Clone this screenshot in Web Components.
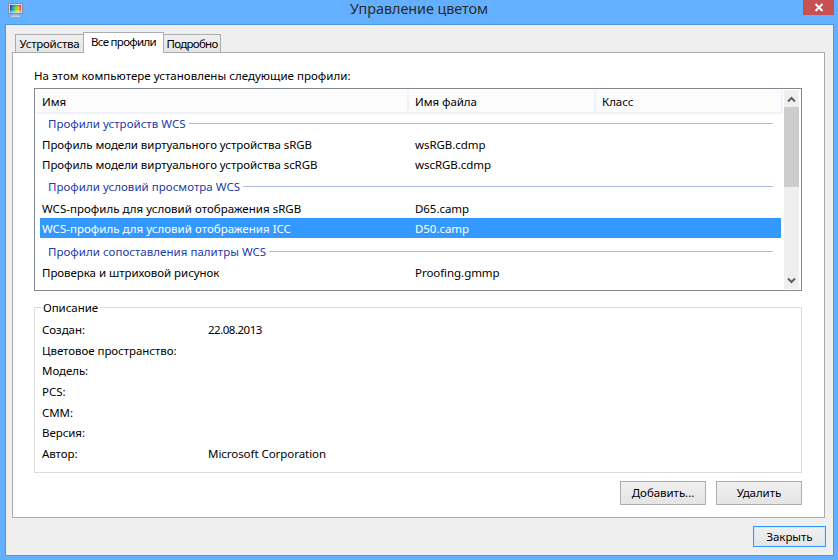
<!DOCTYPE html>
<html lang="ru">
<head>
<meta charset="utf-8">
<title>Управление цветом</title>
<style>
  html, body { margin: 0; height: 100%; background: #62b0ff; overflow: hidden; }
  body { font: 11.5px "Noto Sans", "Open Sans", sans-serif; letter-spacing: -0.05px; color: #000; }
</style>
</head>
<body>
<color-dialog heading="Управление цветом">
  <tab-strip></tab-strip>
  <tab-page>
    <profile-list></profile-list>
    <profile-info></profile-info>
    <div slot="actions">
      <win-button>Добавить...</win-button>
      <win-button>Удалить</win-button>
    </div>
  </tab-page>
  <win-button slot="footer" default>Закрыть</win-button>
</color-dialog>

<script>
// Окно
class ColorDialog extends HTMLElement {
  constructor() {
    super();
    const title = this.getAttribute('heading');
    this.attachShadow({ mode: 'open' }).innerHTML = `
      <style>
        :host { display: flex; flex-direction: column; width: 838px; height: 560px; box-sizing: border-box; }
        .bar { height: 24px; flex: none; display: grid; grid-template-columns: 1fr auto 1fr; }
        .icon { margin: 3px 0 0 8px; display: block; }
        .title { font-size: 14.4px; line-height: 17px; color: #2b2b2b; }
        .close { justify-self: end; width: 31px; height: 15px; margin-right: 4px; background: #c75050; display: flex; align-items: center; justify-content: center; }
        .client { flex: none; height: 532px; margin: 0 4px 0 5px; box-sizing: border-box; border: 1px solid #4c98dc; background: #efefef; padding: 8px 7px 0 6px; display: flex; flex-direction: column; }
        .foot { display: flex; justify-content: flex-end; margin-top: 8px; }
      </style>
      <div class="bar">
        <svg class="icon" width="15" height="14" viewBox="0 0 15 14">
          <defs>
            <linearGradient id="spec" x1="0" x2="1" y1="0" y2="0">
              <stop offset="0" stop-color="#1f2fc0"/><stop offset=".3" stop-color="#18b8c0"/>
              <stop offset=".55" stop-color="#7ce030"/><stop offset=".8" stop-color="#f0c020"/><stop offset="1" stop-color="#e03080"/>
            </linearGradient>
            <linearGradient id="fade" x1="0" x2="0" y1="0" y2="1">
              <stop offset="0" stop-color="#000" stop-opacity=".25"/><stop offset=".6" stop-color="#fff" stop-opacity="0"/><stop offset="1" stop-color="#fff" stop-opacity=".6"/>
            </linearGradient>
          </defs>
          <rect x=".5" y=".5" width="14" height="10" fill="#d9d9d9" stroke="#8e8e8e"/>
          <rect x="2" y="2" width="11" height="7.5" fill="url(#spec)"/>
          <rect x="2" y="2" width="11" height="7.5" fill="url(#fade)"/>
          <path d="M5 11h5v1.5H5z" fill="#b5b5b5"/>
          <path d="M3 12.5h9V14H3z" fill="#cfcfcf"/>
        </svg>
        <div class="title">${title}</div>
        <div class="close">
          <svg width="10" height="9" viewBox="0 0 10 9"><path d="M1.5 1l7 7M8.5 1l-7 7" stroke="#fff" stroke-width="2" fill="none"/></svg>
        </div>
      </div>
      <div class="client">
        <slot></slot>
        <div class="foot"><slot name="footer"></slot></div>
      </div>`;
  }
}

// Вкладки
class TabStrip extends HTMLElement {
  constructor() {
    super();
    this.attachShadow({ mode: 'open' }).innerHTML = `
      <style>
        :host { display: flex; height: 20px; flex: none; align-items: flex-end; padding-left: 4px; margin-bottom: -1px; position: relative; z-index: 1; }
        div { box-sizing: border-box; height: 18px; border: 1px solid #acacac; border-bottom: 0; margin: 0 0 1px -1px; background: linear-gradient(#f0f0f0, #e5e5e5); text-align: center; line-height: 18px; }
        .on { height: 21px; background: #fff; margin-bottom: 0; position: relative; line-height: 17px; }
      </style>
      <div style="width:69px;letter-spacing:-.25px">Устройства</div>
      <div class="on" style="width:81px;letter-spacing:-.7px">Все профили</div>
      <div style="width:58px;letter-spacing:-.7px">Подробно</div>`;
  }
}

class TabPage extends HTMLElement {
  constructor() {
    super();
    this.attachShadow({ mode: 'open' }).innerHTML = `
      <style>
        :host { display: flex; flex-direction: column; flex: none; height: 466px; box-sizing: border-box; border: 1px solid #acacac; background: #fff; padding: 14px 22px 0 21px; margin-right: 1px; }
        .lead { height: 21px; line-height: 17px; letter-spacing: .03px; }
        .actions { margin-top: 8px; }
        ::slotted([slot=actions]) { display: flex; justify-content: flex-end; gap: 10px; }
      </style>
      <div class="lead">На этом компьютере установлены следующие профили:</div>
      <slot></slot>
      <div class="actions"><slot name="actions"></slot></div>`;
  }
}

// Список профилей
const rows = [
  ['g', 'Профили устройств WCS'],
  ['r', 'Профиль модели виртуального устройства sRGB', 'wsRGB.cdmp'],
  ['r', 'Профиль модели виртуального устройства scRGB', 'wscRGB.cdmp'],
  ['g', 'Профили условий просмотра WCS'],
  ['r', 'WCS-профиль для условий отображения sRGB', 'D65.camp'],
  ['s', 'WCS-профиль для условий отображения ICC', 'D50.camp'],
  ['g', 'Профили сопоставления палитры WCS'],
  ['r', 'Проверка и штриховой рисунок', 'Proofing.gmmp'],
  ['r', 'Фотография', 'Photo.gmmp']
];

class ProfileList extends HTMLElement {
  constructor() {
    super();
    const body = rows.map(([kind, a, b]) => kind === 'g'
      ? `<div class="group"><span>${a}</span><i></i></div>`
      : `<div class="row ${kind === 's' ? 'sel' : ''}"><span class="c1 ${a.startsWith('WCS') ? 'wcs' : ''}">${a}</span><span>${b}</span></div>`).join('');
    this.attachShadow({ mode: 'open' }).innerHTML = `
      <style>
        :host { display: flex; flex: none; height: 203px; box-sizing: border-box; border: 1px solid #828790; padding: 1px 2px 1px 1px; background: #fff; margin-bottom: 16px; }
        .main { flex: none; width: 747px; overflow: hidden; }
        .head { display: grid; grid-template-columns: 373px 187px 187px; height: 22px; background: #fcfcfc; border-bottom: 2px solid #eef2fb; }
        .head div { padding-left: 6px; line-height: 23px; border-right: 2px solid #eef2fb; }
        .group { height: 24px; display: flex; align-items: center; padding: 0 10px 0 12px; color: #1c3aa9; gap: 3px; box-sizing: border-box; letter-spacing: .03px; }
        .head + .group { height: 20px; padding-bottom: 2px; }
        .sel + .group { margin: 1px 0 -1px; }
        .group i { flex: 1; height: 1px; background: #aebbdc; margin-top: 1px; }
        .row { display: grid; grid-template-columns: 373px 1fr; height: 20px; line-height: 22px; margin: 0 2px 0 4px; padding-left: 2px; }
        .row .c1 { white-space: nowrap; }
        .row .wcs { letter-spacing: .02px; }
        .sel { background: #3399ff; color: #fff; }
        .sb { margin-left: 1px; flex: 1; background: #efefef; display: flex; flex-direction: column; }
        .sb svg { flex: none; display: block; margin: 0 auto; }
        .thumb { height: 80px; background: #cdcdcd; flex: none; }
        .gap { flex: 1; }
      </style>
      <div class="main">
        <div class="head"><div>Имя</div><div>Имя файла</div><div>Класс</div></div>
        ${body}
      </div>
      <div class="sb">
        <svg width="15" height="17" viewBox="0 0 15 17"><path d="M4 11.5l3.5-3.5L11 11.5" fill="none" stroke="#606060" stroke-width="2"/></svg>
        <div class="thumb"></div>
        <div class="gap"></div>
        <svg width="15" height="17" viewBox="0 0 15 17"><path d="M4 6.5L7.5 10 11 6.5" fill="none" stroke="#606060" stroke-width="2"/></svg>
      </div>`;
  }
}

// Описание
const details = [
  ['Создан:', '<span style="letter-spacing:-.5px">22.08.2013</span>'],
  ['Цветовое пространство:', ''],
  ['Модель:', ''],
  ['PCS:', ''],
  ['CMM:', ''],
  ['Версия:', ''],
  ['Автор:', 'Microsoft Corporation']
];

class ProfileInfo extends HTMLElement {
  constructor() {
    super();
    this.attachShadow({ mode: 'open' }).innerHTML = `
      <style>
        :host { display: block; flex: none; height: 166px; box-sizing: border-box; border: 1px solid #dcdcdc; position: relative; padding: 12px 7px 0; }
        .legend { position: absolute; top: -9px; left: 6px; background: #fff; padding: 0 2px; line-height: 17px; }
        .grid { display: grid; grid-template-columns: 166px 1fr; grid-auto-rows: 20.7px; line-height: 20px; }
      </style>
      <div class="legend">Описание</div>
      <div class="grid">${details.map(([k, v]) => `<div>${k}</div><div>${v}</div>`).join('')}</div>`;
  }
}

class WinButton extends HTMLElement {
  constructor() {
    super();
    const isDefault = this.hasAttribute('default');
    this.attachShadow({ mode: 'open' }).innerHTML = `
      <style>
        :host { display: block; flex: none; box-sizing: border-box; width: ${isDefault ? 73 : 86}px; height: ${isDefault ? 21 : 24}px;
          border: 1px solid ${isDefault ? '#3399ff' : '#acacac'}; background: linear-gradient(#f0f0f0, #e5e5e5);
          text-align: center; line-height: ${isDefault ? 19 : 22}px; ${isDefault ? 'box-shadow: inset 0 0 0 1px #cfe6fb;' : ''} }
      </style>
      <slot></slot>`;
  }
}

customElements.define('color-dialog', ColorDialog);
customElements.define('tab-strip', TabStrip);
customElements.define('tab-page', TabPage);
customElements.define('profile-list', ProfileList);
customElements.define('profile-info', ProfileInfo);
customElements.define('win-button', WinButton);
</script>
</body>
</html>
